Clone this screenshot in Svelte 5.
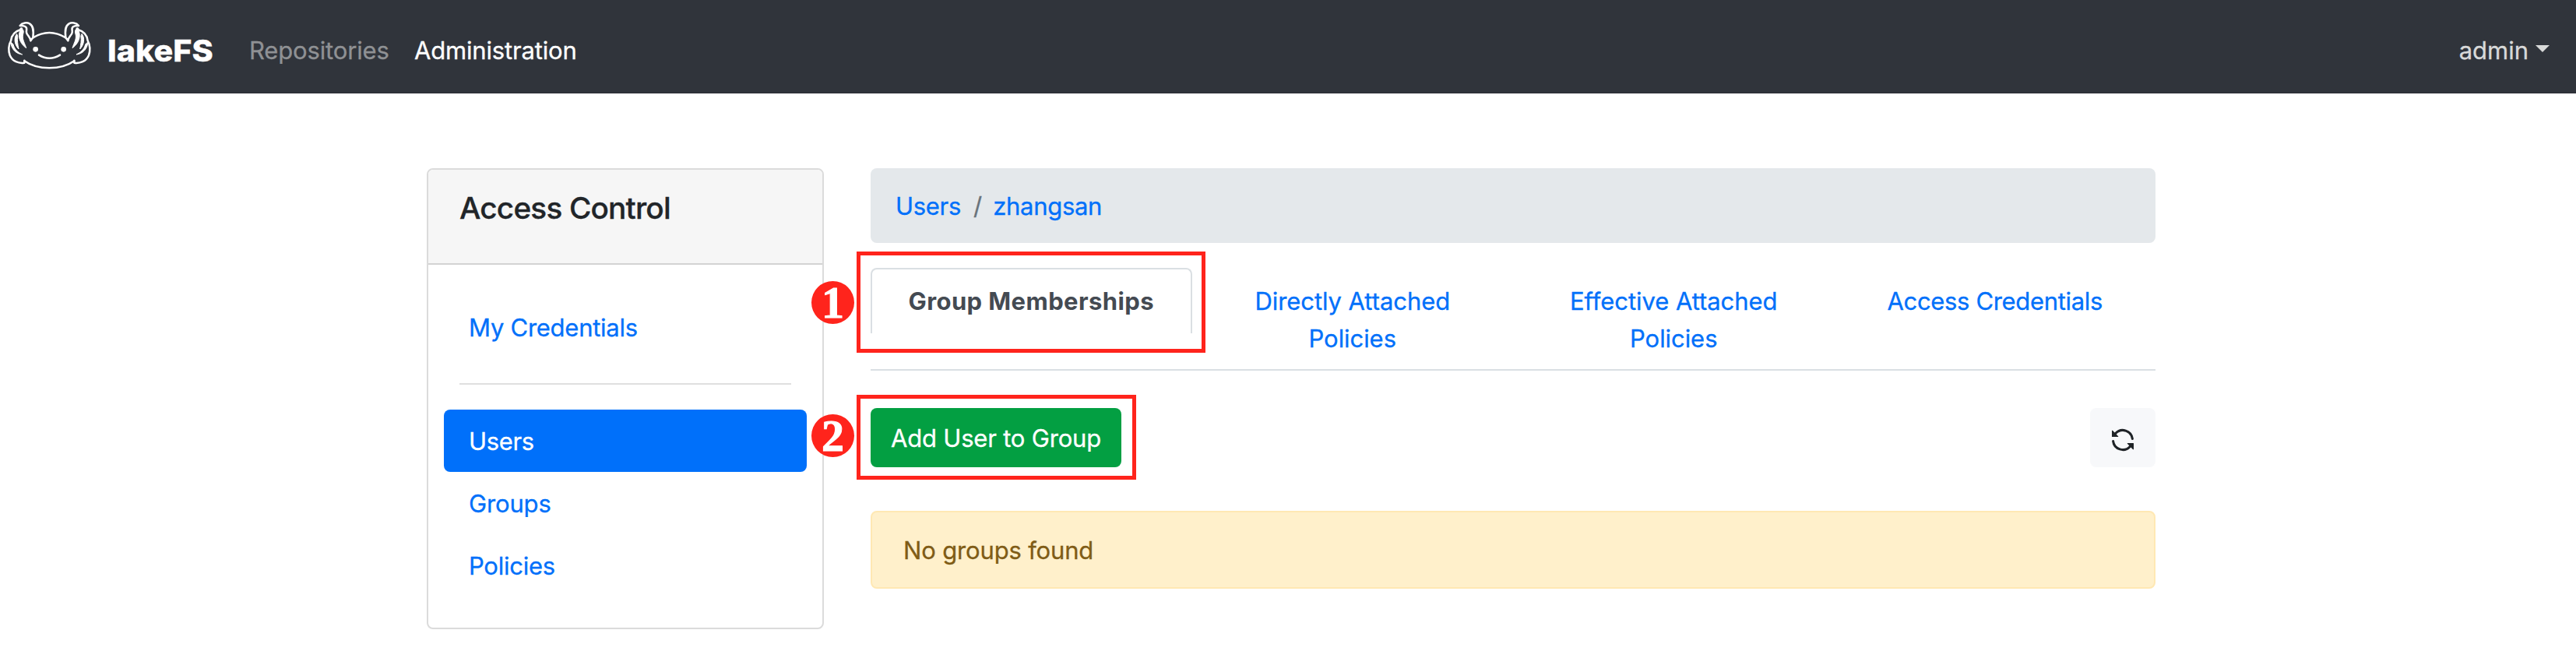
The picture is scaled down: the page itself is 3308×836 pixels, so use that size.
<script>
  const sideLinks = [
    { label: 'Users', active: true, ls: -0.33 },
    { label: 'Groups', active: false, ls: -0.16 },
    { label: 'Policies', active: false, ls: -0.26 }
  ];
  const tabs = [
    { lines: ['Group Memberships'], active: true, ls: 0.4 },
    { lines: ['Directly Attached', 'Policies'], active: false, ls: -0.06 },
    { lines: ['Effective Attached', 'Policies'], active: false, ls: -0.06 },
    { lines: ['Access Credentials'], active: false, ls: -0.34 }
  ];
  const sides = ['translate(0 0)', 'translate(380 0) scale(-1 1)'];
</script>

<nav class="navbar">
  <a class="brand" href="#home">
    <svg class="logo" viewBox="27 82 327 189" width="109" height="63" fill="none" stroke="#fff" stroke-width="7.5" stroke-linejoin="round" stroke-linecap="round">
      <path d="M127 146Q190 108 253 146" />
      <path d="M94 236Q132 263 190 263Q248 263 286 236" />
      {#each sides as side}
        <g transform={side}>
          <path d="M77 100C86 88 104 87 114 92C130 102 130 122 127 146L118 158C117 144 104 137 102 126C100 118 107 110 98 104Q92 99 77 100Z" />
          <path d="M84 111Q78 110 80 115C56 122 44 140 42 158C32 174 32 198 38 214C48 238 72 246 94 243V234" />
          <path d="M80 115C68 130 70 164 101 186C96 168 86 156 88 136C92 124 92 116 84 111Z" fill="#fff" stroke-width="3" />
          <path d="M64 132C52 148 56 174 72 190C68 170 66 158 68 140Z" fill="#fff" stroke-width="3" />
          <path d="M41 164C44 190 60 208 86 211C68 202 56 192 51 172Z" fill="#fff" stroke-width="3" />
        </g>
      {/each}
      <circle cx="137" cy="191" r="10" fill="#fff" stroke="none" />
      <circle cx="245" cy="191" r="10" fill="#fff" stroke="none" />
      <path d="M150 213Q190 238 231 213" />
    </svg>
    <span class="wordmark">lakeFS</span>
  </a>
  <a class="navlink repos" href="#repositories">Repositories</a>
  <a class="navlink current" href="#administration">Administration</a>
  <a class="navlink user" href="#user">admin<span class="caret"></span></a>
</nav>

<div class="container">
  <aside class="card">
    <header><h5>Access Control</h5></header>
    <div class="card-body">
      <a class="pill cred" href="#credentials">My Credentials</a>
      <hr />
      {#each sideLinks as link}
        <a class="pill" class:active={link.active} style="letter-spacing:{link.ls}px" href="#{link.label}">{link.label}</a>
      {/each}
    </div>
  </aside>

  <main>
    <div class="breadcrumb">
      <a href="#users">Users</a><span class="slash">/</span><a href="#zhangsan">zhangsan</a>
    </div>

    <div class="tabs">
      {#each tabs as tab}
        <div class="tab-cell">
          <a class="tab" class:active={tab.active} style="letter-spacing:{tab.ls}px" href="#tab">
            {#each tab.lines as line}<span>{line}</span>{/each}
          </a>
        </div>
      {/each}
      <div class="callout first"><div class="badge"><span>1</span></div></div>
    </div>

    <div class="actions">
      <button class="add">Add User to Group</button>
      <button class="refresh" aria-label="Refresh">
        <svg viewBox="0 0 16 16" width="32" height="32" fill="#1f2327"><path d="M8 2.5a5.487 5.487 0 00-4.131 1.869l1.204 1.204A.25.25 0 014.896 6H1.25A.25.25 0 011 5.75V2.104a.25.25 0 01.427-.177l1.38 1.38A7.001 7.001 0 0114.95 7.16a.75.75 0 11-1.49.178A5.501 5.501 0 008 2.5zM1.705 8.005a.75.75 0 01.834.656 5.501 5.501 0 009.592 2.97l-1.204-1.204a.25.25 0 01.177-.427h3.646a.25.25 0 01.25.25v3.646a.25.25 0 01-.427.177l-1.38-1.38A7.001 7.001 0 011.05 8.84a.75.75 0 01.656-.834z" /></svg>
      </button>
      <div class="callout second"><div class="badge"><span>2</span></div></div>
    </div>

    <div class="alert">No groups found</div>
  </main>
</div>

<style>
  :global(body) { margin: 0; background: #fff; }
  :global(#app) { font: 400 31px/48px Inter, sans-serif; color: #212529; -webkit-text-stroke: 0.3px; }
  nav, div, aside, main, header, a, button, hr { box-sizing: border-box; }
  a { color: #0070fa; text-decoration: none; }

  .navbar { display: flex; align-items: flex-start; height: 120px; background: #30343b; border-bottom: 1px solid #2b2d35; }
  .brand { display: flex; align-items: flex-start; width: 320px; padding-left: 9px; color: #fff; }
  .logo { margin-top: 27px; flex: none; }
  .wordmark { margin: 41px 0 0 20px; font: 800 38px/48px Inter, sans-serif; transform: scaleX(1.086); transform-origin: 0 0; }
  .navlink { padding-top: 41px; white-space: nowrap; }
  .repos { width: 212px; color: #8f9194; letter-spacing: -0.15px; }
  .current { color: #fff; letter-spacing: -0.17px; }
  .user { display: flex; margin-left: auto; margin-right: 34px; color: #d8d9d9; }
  .caret { margin: 17px 0 0 9px; width: 0; height: 0; border: 9.5px solid transparent; border-top-color: #d8d9d9; border-bottom: 0; }

  .container { display: flex; gap: 60px; width: 2220px; margin: 96px 0 0 548px; align-items: flex-start; }
  .card { width: 510px; height: 592px; border: 2px solid #dbdbdb; border-radius: 8px; overflow: hidden; }
  header { height: 122px; padding: 25px 40px 0; background: #f6f6f6; border-bottom: 2px solid #d3d3d3; }
  h5 { margin: 0; font: 500 38.75px/48px Inter, sans-serif; letter-spacing: -0.83px; color: #212529; }
  .card-body { padding: 40px 18px 40px 20px; }
  .pill { display: block; height: 80px; padding: 17px 32px 0; border-radius: 8px; }
  .pill.active { color: #fff; background: #0070fa; width: 466px; }
  .cred { letter-spacing: -0.26px; }
  hr { height: 2px; margin: 32px 22px 32px 20px; border: 0; background: #dfdfdf; }

  main { width: 1650px; }
  .breadcrumb { display: flex; height: 96px; padding: 25px 32px 0; background: #e4e8eb; border-radius: 8px; letter-spacing: -0.32px; }
  .slash { color: #69737b; margin: 0 14.5px 0 16px; }
  .tabs { position: relative; display: grid; grid-template-columns: repeat(4, 1fr); height: 132px; margin-top: 32px; border-bottom: 2px solid #dadfe3; }
  .tab { display: flex; flex-direction: column; align-items: center; height: 84px; padding-top: 17px; border: 2px solid transparent; border-bottom: 0; border-radius: 8px 8px 0 0; text-align: center; white-space: nowrap; }
  .tab.active { color: #444a52; font-weight: 700; border-color: #dadfe3; -webkit-text-stroke: 0; }
  .actions { position: relative; display: flex; justify-content: space-between; margin-top: 48px; }
  button { height: 76px; padding: 0; border: 0; border-radius: 8px; font: inherit; }
  .add { width: 322px; padding-top: 2px; background: #039f42; color: #fff; letter-spacing: -0.2px; }
  .refresh { display: flex; align-items: center; justify-content: center; width: 84px; padding-top: 5px; background: #f7f8fa; }
  .alert { height: 100px; margin-top: 56px; padding: 25px 40px 0; background: #fff0cb; border: 2px solid #ffe8b3; border-radius: 8px; color: #7f5c16; letter-spacing: -0.16px; }

  .callout { position: absolute; left: -18px; border: 5px solid #ff241c; }
  .first { top: -21px; width: 448px; height: 130px; }
  .second { top: -17px; width: 359px; height: 109px; }
  .badge { position: absolute; left: -63px; width: 55px; height: 55px; border-radius: 50%; background: #ff241c; color: #fff; text-align: center; font: 700 58px/55px "Liberation Serif", serif; -webkit-text-stroke: 1px #fff; }
  .first .badge { top: 33px; }
  .second .badge { top: 20px; }
  .badge span { display: block; }
</style>
